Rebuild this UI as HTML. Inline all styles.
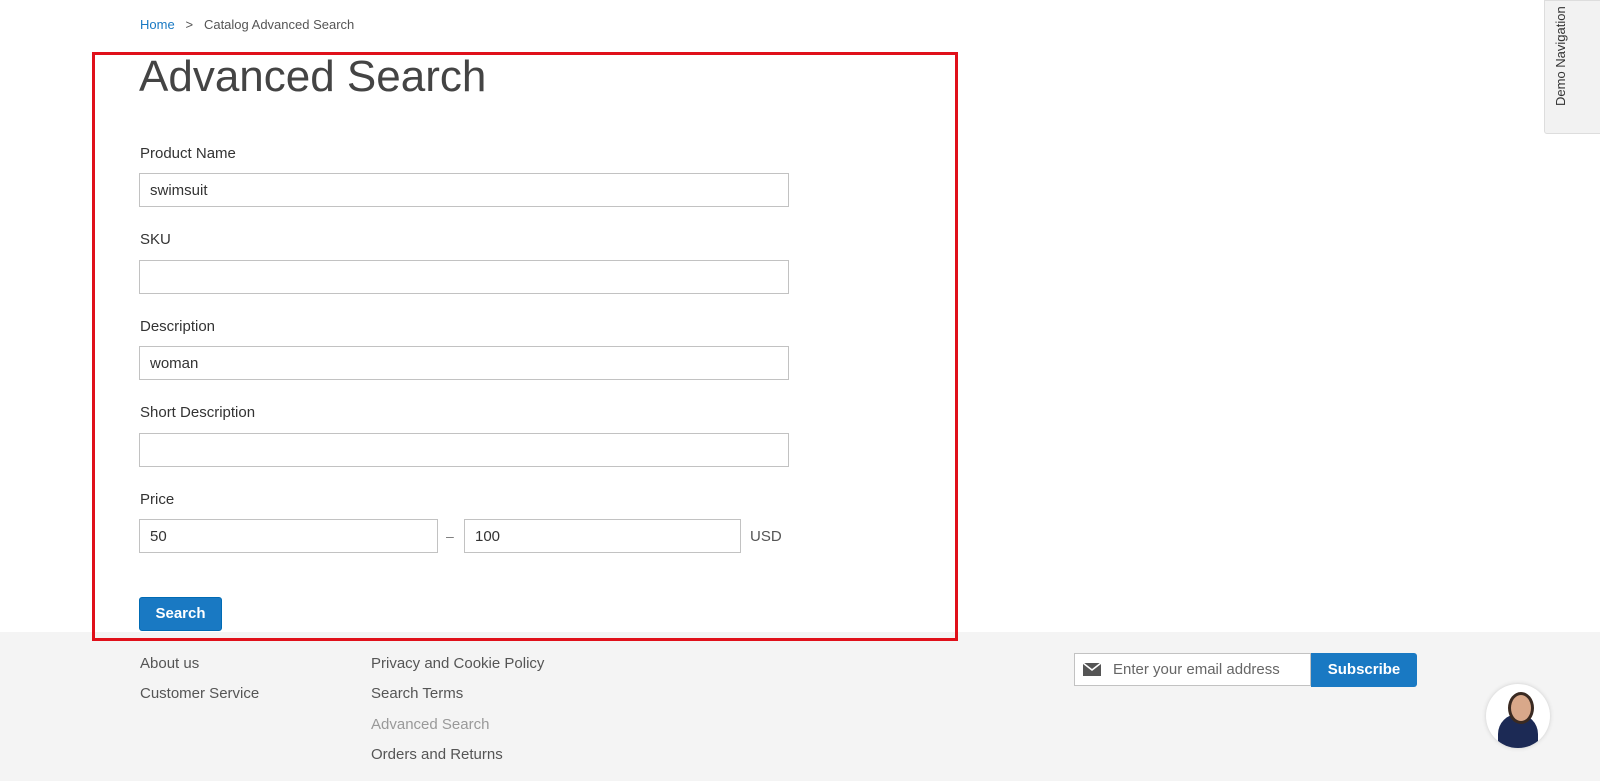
<!DOCTYPE html>
<html><head><meta charset="utf-8"><style>
body{margin:0;width:1600px;height:781px;overflow:hidden;background:#fff;font-family:"Liberation Sans",sans-serif;color:#333;position:relative}
.a{position:absolute}
.bc{top:17px;left:140px;font-size:13px;color:#555}
.bc span{color:#1979c3}
h1{position:absolute;margin:0;top:52px;left:139px;font-size:44px;font-weight:normal;color:#444;letter-spacing:0}
.lbl{position:absolute;left:140px;font-size:15px;color:#333}
.inp{position:absolute;left:139px;height:32px;border:1px solid #c2c2c2;background:#fff;font-size:15px;line-height:33px;padding-left:10px;box-sizing:content-box;width:638px}
.foot{position:absolute;left:0;top:632px;width:1600px;height:149px;background:#f4f4f4}
.fl{position:absolute;font-size:15px;color:#555}
</style></head><body>
<div class="a bc"><span>Home</span> &nbsp;&nbsp;&gt;&nbsp;&nbsp; Catalog Advanced Search</div>
<h1>Advanced Search</h1>
<div class="lbl" style="top:145px">Product Name</div>
<div class="inp" style="top:173px">swimsuit</div>
<div class="lbl" style="top:231px">SKU</div>
<div class="inp" style="top:260px"></div>
<div class="lbl" style="top:318px">Description</div>
<div class="inp" style="top:346px">woman</div>
<div class="lbl" style="top:404px">Short Description</div>
<div class="inp" style="top:433px"></div>
<div class="lbl" style="top:491px">Price</div>
<div class="inp" style="top:519px;width:287px">50</div>
<div class="a" style="top:528px;left:446px;font-size:14px;color:#777">–</div>
<div class="inp" style="top:519px;left:464px;width:265px">100</div>
<div class="a" style="top:528px;left:750px;font-size:15px;color:#555">USD</div>
<div class="foot"></div>
<div class="a" style="top:597px;left:139px;width:83px;height:34px;background:#1979c3;border:1px solid #006bb4;border-radius:3px;box-sizing:border-box;color:#fff;font-weight:bold;font-size:15px;text-align:center;line-height:32px">Search</div>
<div class="a" style="top:52px;left:92px;width:866px;height:589px;border:3px solid #e0101a;box-sizing:border-box"></div>
<div class="fl" style="top:655px;left:140px">About us</div>
<div class="fl" style="top:685px;left:140px">Customer Service</div>
<div class="fl" style="top:655px;left:371px">Privacy and Cookie Policy</div>
<div class="fl" style="top:685px;left:371px">Search Terms</div>
<div class="fl" style="top:716px;left:371px;color:#999">Advanced Search</div>
<div class="fl" style="top:746px;left:371px">Orders and Returns</div>
<div class="a" style="top:653px;left:1074px;width:237px;height:33px;border:1px solid #c2c2c2;background:#fff;box-sizing:border-box"></div>
<svg class="a" style="top:663px;left:1083px" width="18" height="13" viewBox="0 0 18 13"><rect x="0" y="0" width="18" height="13" fill="#555"/><path d="M0 0 L9 7 L18 0" stroke="#fff" fill="none" stroke-width="1.6"/></svg>
<div class="a" style="top:661px;left:1113px;font-size:15px;color:#666">Enter your email address</div>
<div class="a" style="top:653px;left:1311px;width:106px;height:34px;background:#1979c3;border-radius:0 3px 3px 0;color:#fff;font-weight:bold;font-size:15px;text-align:center;line-height:33px">Subscribe</div>
<div class="a" style="top:684px;left:1486px;width:64px;height:64px;border-radius:50%;background:#fff;box-shadow:0 0 4px #ccc;overflow:hidden"><div style="position:absolute;left:12px;top:30px;width:40px;height:40px;border-radius:50% 50% 0 0;background:#1c2a55"></div><div style="position:absolute;left:22px;top:8px;width:20px;height:26px;border-radius:50%;background:#d9a88a;border:3px solid #3a2a22"></div></div>
<div class="a" style="top:0;left:1544px;width:56px;height:132px;background:#f2f2f2;border:1px solid #ddd;border-radius:0 0 0 3px"></div>
<div class="a" style="top:106px;left:1553px;transform:rotate(-90deg);transform-origin:0 0;font-size:13px;color:#333;white-space:nowrap">Demo Navigation</div>
</body></html>
